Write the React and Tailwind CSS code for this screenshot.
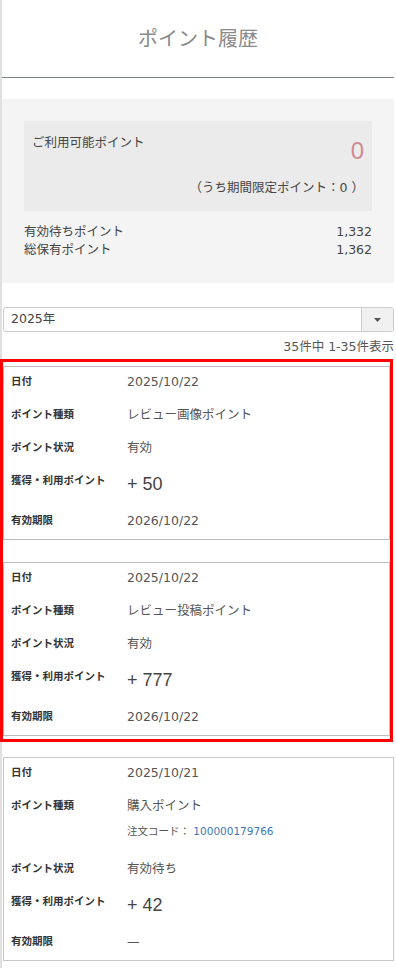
import React from "react";

const base = "font-['DejaVu_Sans','Noto_Sans_CJK_JP',sans-serif]";
const big = "font-['Liberation_Sans','Noto_Sans_CJK_JP',sans-serif]";

function Row({ label, children }) {
  return (
    <div className="flex">
      <div className="w-[116px] shrink-0 text-[10.5px] font-bold leading-[19px] text-[#333]">
        {label}
      </div>
      <div className="min-w-0 flex-1 text-[12.5px] leading-[19px] text-[#555]">
        {children}
      </div>
    </div>
  );
}

function Card({ item, className = "" }) {
  return (
    <div
      className={`flex flex-col gap-[14px] border border-[#bdbdbd] bg-white pl-[7px] pt-[5px] pb-[9px] ${className}`}
    >
      <Row label="日付">{item.date}</Row>
      <Row label="ポイント種類">
        <div>{item.type}</div>
        {item.order && (
          <div className="pt-[7px] pb-[4px] text-[10.5px] leading-[19px] text-[#555]">
            注文コード：{" "}
            <span className="text-[#3b78b5]">{item.order}</span>
          </div>
        )}
      </Row>
      <Row label="ポイント状況">{item.status}</Row>
      <Row label="獲得・利用ポイント">
        <div className={`${big} text-[18px] leading-[26px] text-[#444]`}>
          + {item.points}
        </div>
      </Row>
      <Row label="有効期限">{item.expire}</Row>
    </div>
  );
}

export default function App() {
  const items = [
    {
      date: "2025/10/22",
      type: "レビュー画像ポイント",
      status: "有効",
      points: "50",
      expire: "2026/10/22",
    },
    {
      date: "2025/10/22",
      type: "レビュー投稿ポイント",
      status: "有効",
      points: "777",
      expire: "2026/10/22",
    },
  ];
  const third = {
    date: "2025/10/21",
    type: "購入ポイント",
    order: "100000179766",
    status: "有効待ち",
    points: "42",
    expire: "—",
  };

  return (
    <div className={`min-h-screen border-l-2 border-[#e0e0e0] bg-white ${base}`}>
      <div className="mr-[2px]">
        <header className="flex h-[78px] items-center justify-center border-b border-[#7c8387]">
          <h1 className="text-[20px] leading-none text-[#8a8a8a]">ポイント履歴</h1>
        </header>

        <section className="mt-[21px] bg-[#f4f4f4] px-[22px] pt-[22px] pb-[24px]">
          <div className="bg-[#ebebeb] px-[8px] pt-[12px] pb-[14px]">
            <div className="flex items-start justify-between">
              <div className="text-[12.5px] leading-[19px] text-[#444]">ご利用可能ポイント</div>
              <div className={`${big} mt-[4px] text-[24px] leading-[28px] text-[#cf8a90]`}>0</div>
            </div>
            <div className="mt-[13px] text-right text-[12.5px] leading-[19px] text-[#444]">
              （うち期間限定ポイント：0 ）
            </div>
          </div>
          <div className="mt-[12px] text-[12.5px] leading-[18px] text-[#444]">
            <div className="flex justify-between">
              <span>有効待ちポイント</span>
              <span>1,332</span>
            </div>
            <div className="flex justify-between">
              <span>総保有ポイント</span>
              <span>1,362</span>
            </div>
          </div>
        </section>

        <div className="mt-[24px] ml-[1px] flex h-[25px] overflow-hidden rounded-[3px] border border-[#cccccc] bg-white">
          <div className="flex flex-1 items-center pl-[7px] text-[12.5px] text-[#444]">2025年</div>
          <div className="flex w-[32px] items-center justify-center border-l border-[#cccccc] bg-[#f0f0f0]">
            <svg width="7" height="4" viewBox="0 0 7 4">
              <path d="M0 0 L7 0 L3.5 4 Z" fill="#555" />
            </svg>
          </div>
        </div>

        <div className="mt-[5px] text-right text-[12.5px] leading-[19px] text-[#555]">
          35件中 1-35件表示
        </div>

        <div className="relative mt-[10px] ml-[1px] mr-[4px] flex flex-col gap-[22px]">
          {items.map((it, i) => (
            <Card key={i} item={it} />
          ))}
          <div className="pointer-events-none absolute -left-[3px] -right-[3px] -top-[7px] -bottom-[6px] border-[3px] border-[#ff0000]" />
        </div>

        <Card item={third} className="mt-[21px] ml-[1px] border-[#c8c8c8]" />
      </div>
    </div>
  );
}
